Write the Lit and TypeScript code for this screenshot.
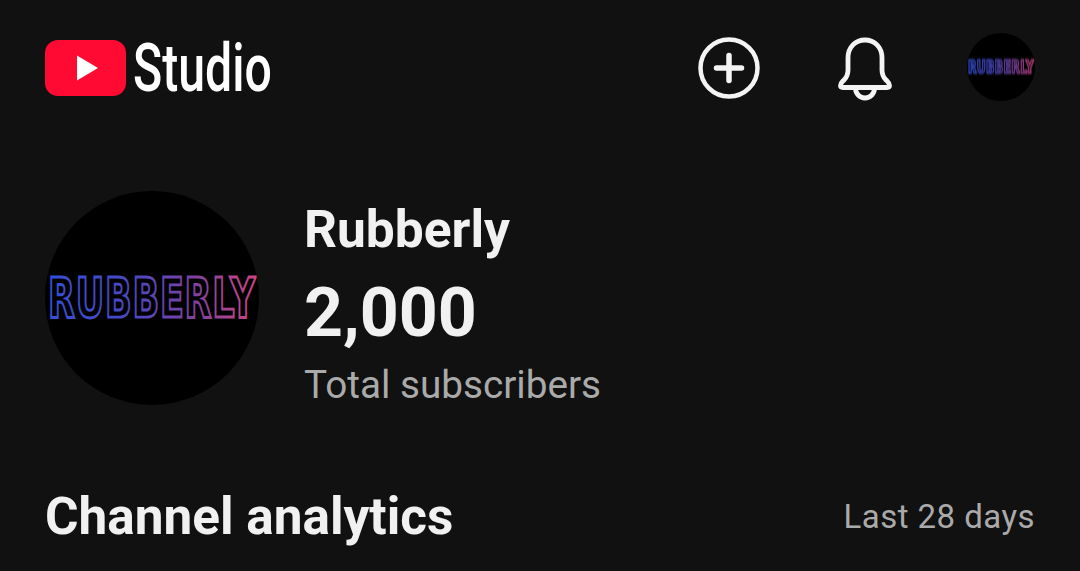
import { LitElement, html, css, svg } from 'lit';
import { customElement } from 'lit/decorators.js';

const wordmark = (id: string, strokeWidth: number) => svg`
  <defs>
    <linearGradient id=${id} x1="0" x2="1" y1="0" y2="0">
      <stop offset="0" stop-color="#3350d8"/>
      <stop offset="0.4" stop-color="#4b48c0"/>
      <stop offset="0.7" stop-color="#7c429f"/>
      <stop offset="1" stop-color="#cf4580"/>
    </linearGradient>
  </defs>
  <rect x="0" y="0" width="214" height="214" fill="#000"/>
  <text x="3" y="78.5" transform="scale(1 1.6)" letter-spacing="0.8"
    font-family="'DejaVu Sans', sans-serif" font-weight="700" font-size="35"
    fill="none" stroke=${`url(#${id})`} stroke-width=${strokeWidth} stroke-linejoin="miter">RUBBERLY</text>
`;

@customElement('app-root')
export class AppRoot extends LitElement {
  static styles = css`
    :host {
      display: block;
      height: 571px;
      overflow: hidden;
      background: #111111;
      color: #f1f1f1;
      font-family: Roboto, 'Noto Sans', sans-serif;
    }
    .page { padding: 33px 45px 0 45px; }

    .top { display: flex; align-items: center; height: 68px; }
    .brand { display: flex; align-items: center; gap: 7px; }
    .yt { width: 81px; height: 56px; display: block; margin-top: 2px; }
    .studio {
      display: inline-block;
      width: 138px;
      font-size: 66px;
      line-height: 68px;
      font-weight: 500;
      color: #fff;
      transform: scaleX(0.73);
      transform-origin: left center;
      white-space: nowrap;
      margin-top: 3px;
    }
    .actions { margin-left: auto; display: flex; align-items: center; }
    .plus { width: 64px; height: 64px; display: block; margin: 1px 76px 0 0; }
    .bell { width: 56px; height: 64px; display: block; margin: 3px 74px 0 0; }
    .mini {
      width: 68px;
      height: 68px;
      border-radius: 50%;
      overflow: hidden;
      display: block;
    }
    .mini text { filter: blur(1.6px); opacity: 0.85; }

    .channel { display: flex; align-items: flex-start; gap: 46px; margin-top: 90px; }
    .avatar {
      width: 214px;
      height: 214px;
      border-radius: 50%;
      overflow: hidden;
      display: block;
      flex: none;
    }
    .info { margin-left: -1px; padding-top: 12px; }
    .name { font-size: 51.5px; line-height: 54px; font-weight: 700; }
    .subs { font-size: 68px; line-height: 76px; font-weight: 700; margin-top: 18px; }
    .label { font-size: 38.7px; line-height: 44px; color: #aaaaaa; margin-top: 12px; }

    .analytics {
      display: flex;
      align-items: center;
      justify-content: space-between;
      margin-top: 82px;
    }
    .title { font-size: 51.3px; line-height: 56px; font-weight: 700; }
    .range { font-size: 33px; color: #aaaaaa; letter-spacing: 0.45px; margin-top: -2px; }
  `;

  render() {
    return html`
      <div class="page">
        <div class="top">
          <div class="brand">
            <svg class="yt" viewBox="0 0 81 56">
              <rect x="0" y="0" width="81" height="56" rx="13" fill="#ff0a33"/>
              <path d="M32 15.5 L53 28 L32 40.5 Z" fill="#fff"/>
            </svg>
            <span class="studio">Studio</span>
          </div>
          <div class="actions">
            <svg class="plus" viewBox="0 0 64 64" fill="none" stroke="#f4f4f4" stroke-linecap="round">
              <circle cx="32" cy="32" r="28.5" stroke-width="4.5"/>
              <path d="M32 19.5 V44.5 M19.5 32 H44.5" stroke-width="5.5"/>
            </svg>
            <svg class="bell" viewBox="0 0 56 64" fill="none" stroke="#f4f4f4" stroke-width="4.8" stroke-linejoin="round">
              <path d="M3.5 48.5 C3.5 46 5 45 7 43 C10 40 11 37 11 33 V21 C11 10 18.5 3 28 3 C37.5 3 45 10 45 21 V33 C45 37 46 40 49 43 C51 45 52.5 46 52.5 48.5 C52.5 50 51.5 50.5 50 50.5 H6 C4.5 50.5 3.5 50 3.5 48.5 Z"/>
              <path d="M18.5 51 C18.5 57 23 61 28 61 C33 61 37.5 57 37.5 51"/>
            </svg>
            <svg class="mini" viewBox="0 0 214 214">${wordmark('mark-small', 4)}</svg>
          </div>
        </div>

        <div class="channel">
          <svg class="avatar" viewBox="0 0 214 214">${wordmark('mark-large', 1.8)}</svg>
          <div class="info">
            <div class="name">Rubberly</div>
            <div class="subs">2,000</div>
            <div class="label">Total subscribers</div>
          </div>
        </div>

        <div class="analytics">
          <span class="title">Channel analytics</span>
          <span class="range">Last 28 days</span>
        </div>
      </div>
    `;
  }
}
